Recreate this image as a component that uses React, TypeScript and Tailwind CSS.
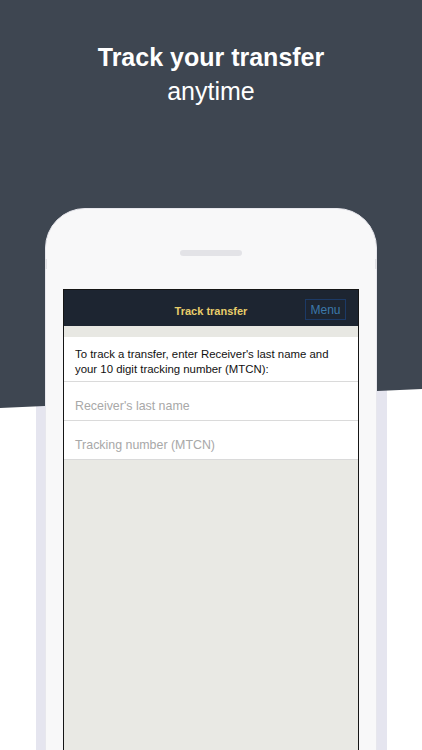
export default function App() {
  return (
    <div className="relative w-[422px] h-[750px] overflow-hidden bg-white font-['Liberation_Sans',Arial,sans-serif]">
      <div className="absolute left-[36px] right-[35px] top-[300px] bottom-0 bg-[#e5e5ef]" />
      <div className="absolute inset-0 bg-[#3e4651] [clip-path:polygon(0_0,100%_0,100%_389px,0_408px)]" />
      <div className="relative flex flex-col items-center">
        <div className="pt-[40px] text-center text-white text-[25px] leading-[34px]">
          <div className="font-bold">Track your transfer</div>
          <div>anytime</div>
        </div>
        <div className="relative mt-[100px] w-[332px] h-[620px] rounded-[40px] bg-[#f8f8f9] border border-[#e7e7ed] flex flex-col items-center">
          <div className="absolute -left-px top-[50px] w-[2px] h-[10px] bg-[#e2e2e6]" />
          <div className="absolute -right-px top-[50px] w-[2px] h-[10px] bg-[#e2e2e6]" />
          <div className="mt-[41px] w-[62px] h-[6px] rounded-full bg-[#e3e3e7]" />
          <div className="mt-[33px] w-[296px] flex-1 border-x border-t border-[#151515] flex flex-col bg-[#e9e9e4]">
            <div className="relative h-[36px] bg-[#1d2531] flex items-center justify-center pt-[6px]">
              <span className="text-[#e8cd6a] text-[11px] font-semibold">Track transfer</span>
              <div className="absolute right-[12px] top-[9px] w-[41px] h-[21px] border border-[#1c3a66] flex items-center justify-center text-[12px] text-[#3c78aa]">
                Menu
              </div>
            </div>
            <div className="h-[11px] bg-[#e8e8e3]" />
            <div className="bg-white h-[44px] px-[11px] pt-[10px] text-[11.4px] leading-[15px] text-[#111]">
              To track a transfer, enter Receiver's last name and your 10 digit tracking number (MTCN):
            </div>
            <div className="h-px bg-[#dadada]" />
            <div className="bg-white h-[38px] px-[11px] pt-[17px] text-[12.4px] leading-[15px] text-[#a8a8a8]">
              Receiver's last name
            </div>
            <div className="h-px bg-[#dadada]" />
            <div className="bg-white h-[38px] px-[11px] pt-[17px] text-[12.4px] leading-[15px] text-[#a8a8a8]">
              Tracking number (MTCN)
            </div>
            <div className="h-px bg-[#dadada]" />
            <div className="flex-1 bg-[#e9e9e4]" />
          </div>
        </div>
      </div>
    </div>
  );
}
